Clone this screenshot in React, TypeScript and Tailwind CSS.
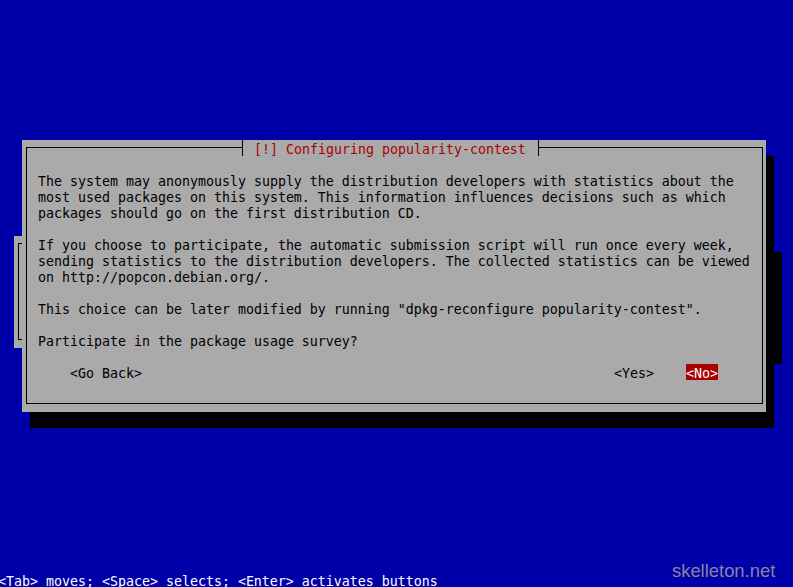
const body = [
  'The system may anonymously supply the distribution developers with statistics about the',
  'most used packages on this system. This information influences decisions such as which',
  'packages should go on the first distribution CD.',
  '',
  'If you choose to participate, the automatic submission script will run once every week,',
  'sending statistics to the distribution developers. The collected statistics can be viewed',
  'on http://popcon.debian.org/.',
  '',
  'This choice can be later modified by running "dpkg-reconfigure popularity-contest".',
  '',
  'Participate in the package usage survey?',
  '',
]

// 8x16 console cells (20px leading drops the glyphs 2px inside a 16px row)
const mono = "font-['DejaVu_Sans_Mono','Liberation_Mono',monospace] text-[13.29px] leading-[20px] whitespace-pre"

function BackDialog() {
  return (
    <div className="absolute left-[14px] top-[236px] w-[760px] h-[112px] bg-[#aaaaaa] shadow-[8px_16px_0_#000] flex pt-[7px] pl-[4px] pr-[3px] pb-[8px]">
      <div className="flex-1 border border-black" />
    </div>
  )
}

function PopconDialog() {
  return (
    <div className="absolute left-[22px] top-[140px] w-[744px] h-[272px] bg-[#aaaaaa] shadow-[8px_16px_0_#000] flex pt-[7px] pl-[4px] pr-[3px] pb-[8px]">
      <div className="flex-1 border border-black pt-[24px] pl-[11px] flex flex-col">
        {body.map((line, i) => (
          <div key={i} className={`${mono} h-[16px] text-black`}>
            {line}
          </div>
        ))}
        <div className={`${mono} h-[16px] flex text-black pl-[32px] mr-[44px]`}>
          <span>{'<Go Back>'}</span>
          <span className="flex-1" />
          <span>{'<Yes>'}</span>
          <span className="ml-[32px] h-[16px] bg-[#aa0000] text-white">{'<No>'}</span>
        </div>
      </div>
      <div className="absolute left-[220px] top-0 w-[297px] h-[16px] bg-[#aaaaaa] border-x border-black pl-[11px]">
        <span className={`${mono} block text-[#aa0000]`}>[!] Configuring popularity-contest</span>
      </div>
    </div>
  )
}

export default function App() {
  return (
    <div className="relative w-[793px] h-[587px] overflow-hidden bg-[#0000aa] flex flex-col justify-end">
      <BackDialog />
      <PopconDialog />
      <div className={`${mono} h-[16px] -mb-[1px] -ml-[2px] text-white`}>
        {'<Tab> moves; <Space> selects; <Enter> activates buttons'}
      </div>
      <div className="absolute left-[672px] top-[561px] font-['Liberation_Sans',Arial,sans-serif] text-[18.4px] leading-[20px] text-[#8585a0]">
        skelleton.net
      </div>
    </div>
  )
}
